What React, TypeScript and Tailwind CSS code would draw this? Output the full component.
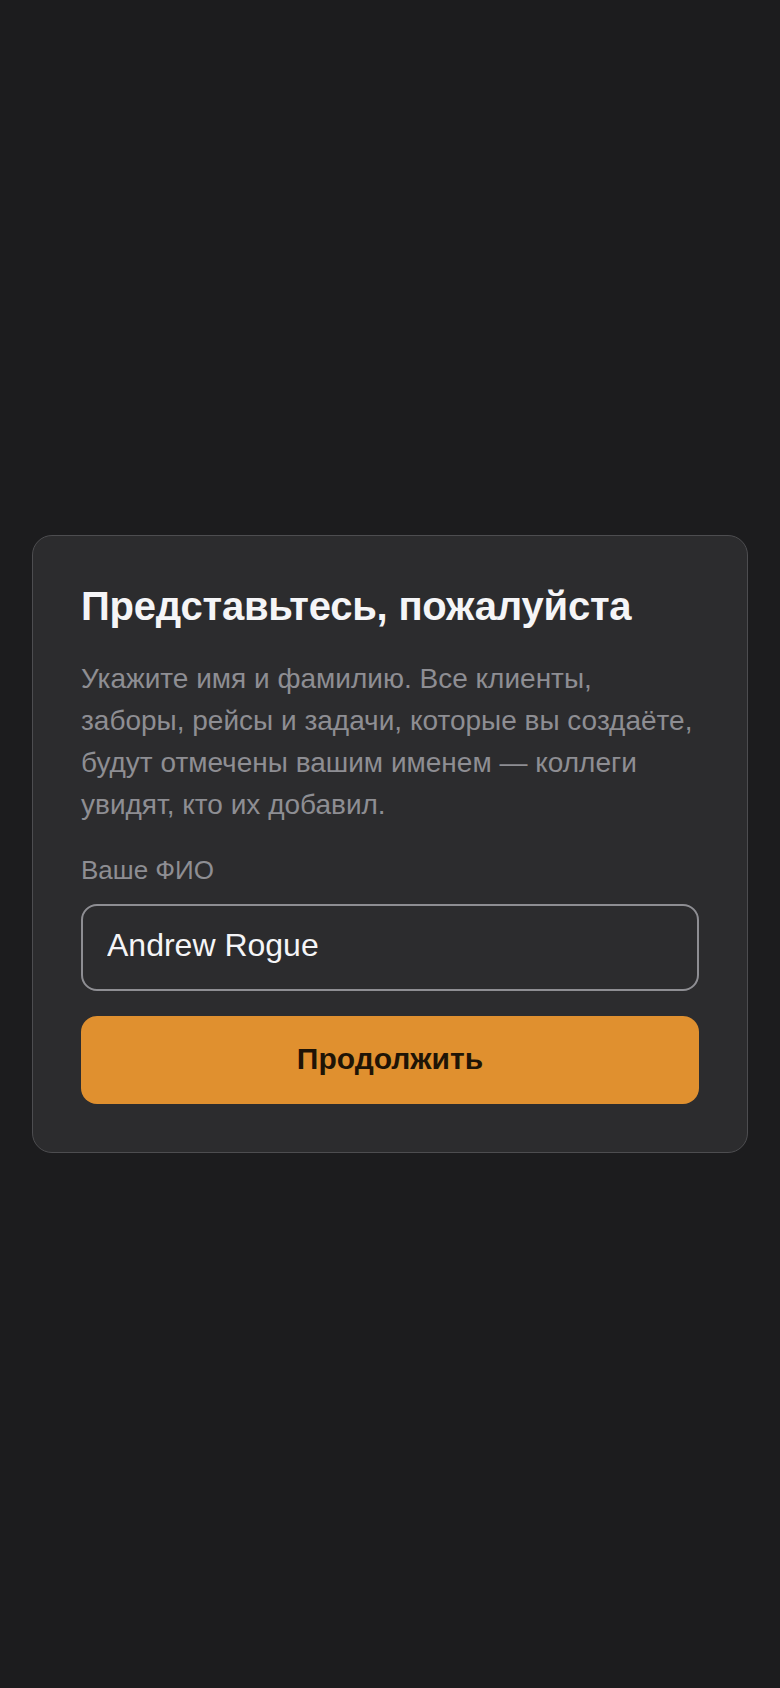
import { useState } from "react";

export default function App() {
  const [name, setName] = useState("Andrew Rogue");

  return (
    <div className="min-h-screen bg-[#1c1c1e] flex items-center justify-center px-8 font-['Liberation_Sans',Arial,sans-serif]">
      <div className="w-full bg-[#2c2c2e] border border-[#4d4d50] rounded-[20px] p-12">
        <h1 className="text-[40px] leading-[44px] tracking-[-0.005em] font-bold text-[#f5f5f7]">Представьтесь, пожалуйста</h1>
        <p className="mt-[30px] text-[28px] leading-[42px] text-[#8e8e93]">
          Укажите имя и фамилию. Все клиенты, заборы, рейсы и задачи, которые вы создаёте, будут отмечены вашим именем — коллеги увидят, кто их добавил.
        </p>
        <label className="block mt-[26px] text-[26px] leading-[36px] text-[#8e8e93]">Ваше ФИО</label>
        <input
          type="text"
          value={name}
          onChange={e => setName(e.target.value)}
          className="mt-4 w-full h-[87px] px-6 pb-[4px] bg-transparent border-2 border-[#8e8e93] rounded-2xl text-[32px] text-[#f5f5f7] outline-none"
        />
        <button className="mt-[25px] w-full h-[88px] pb-[4px] bg-[#e0902f] rounded-2xl text-[30px] font-bold text-[#1f1406]">
          Продолжить
        </button>
      </div>
    </div>
  );
}
